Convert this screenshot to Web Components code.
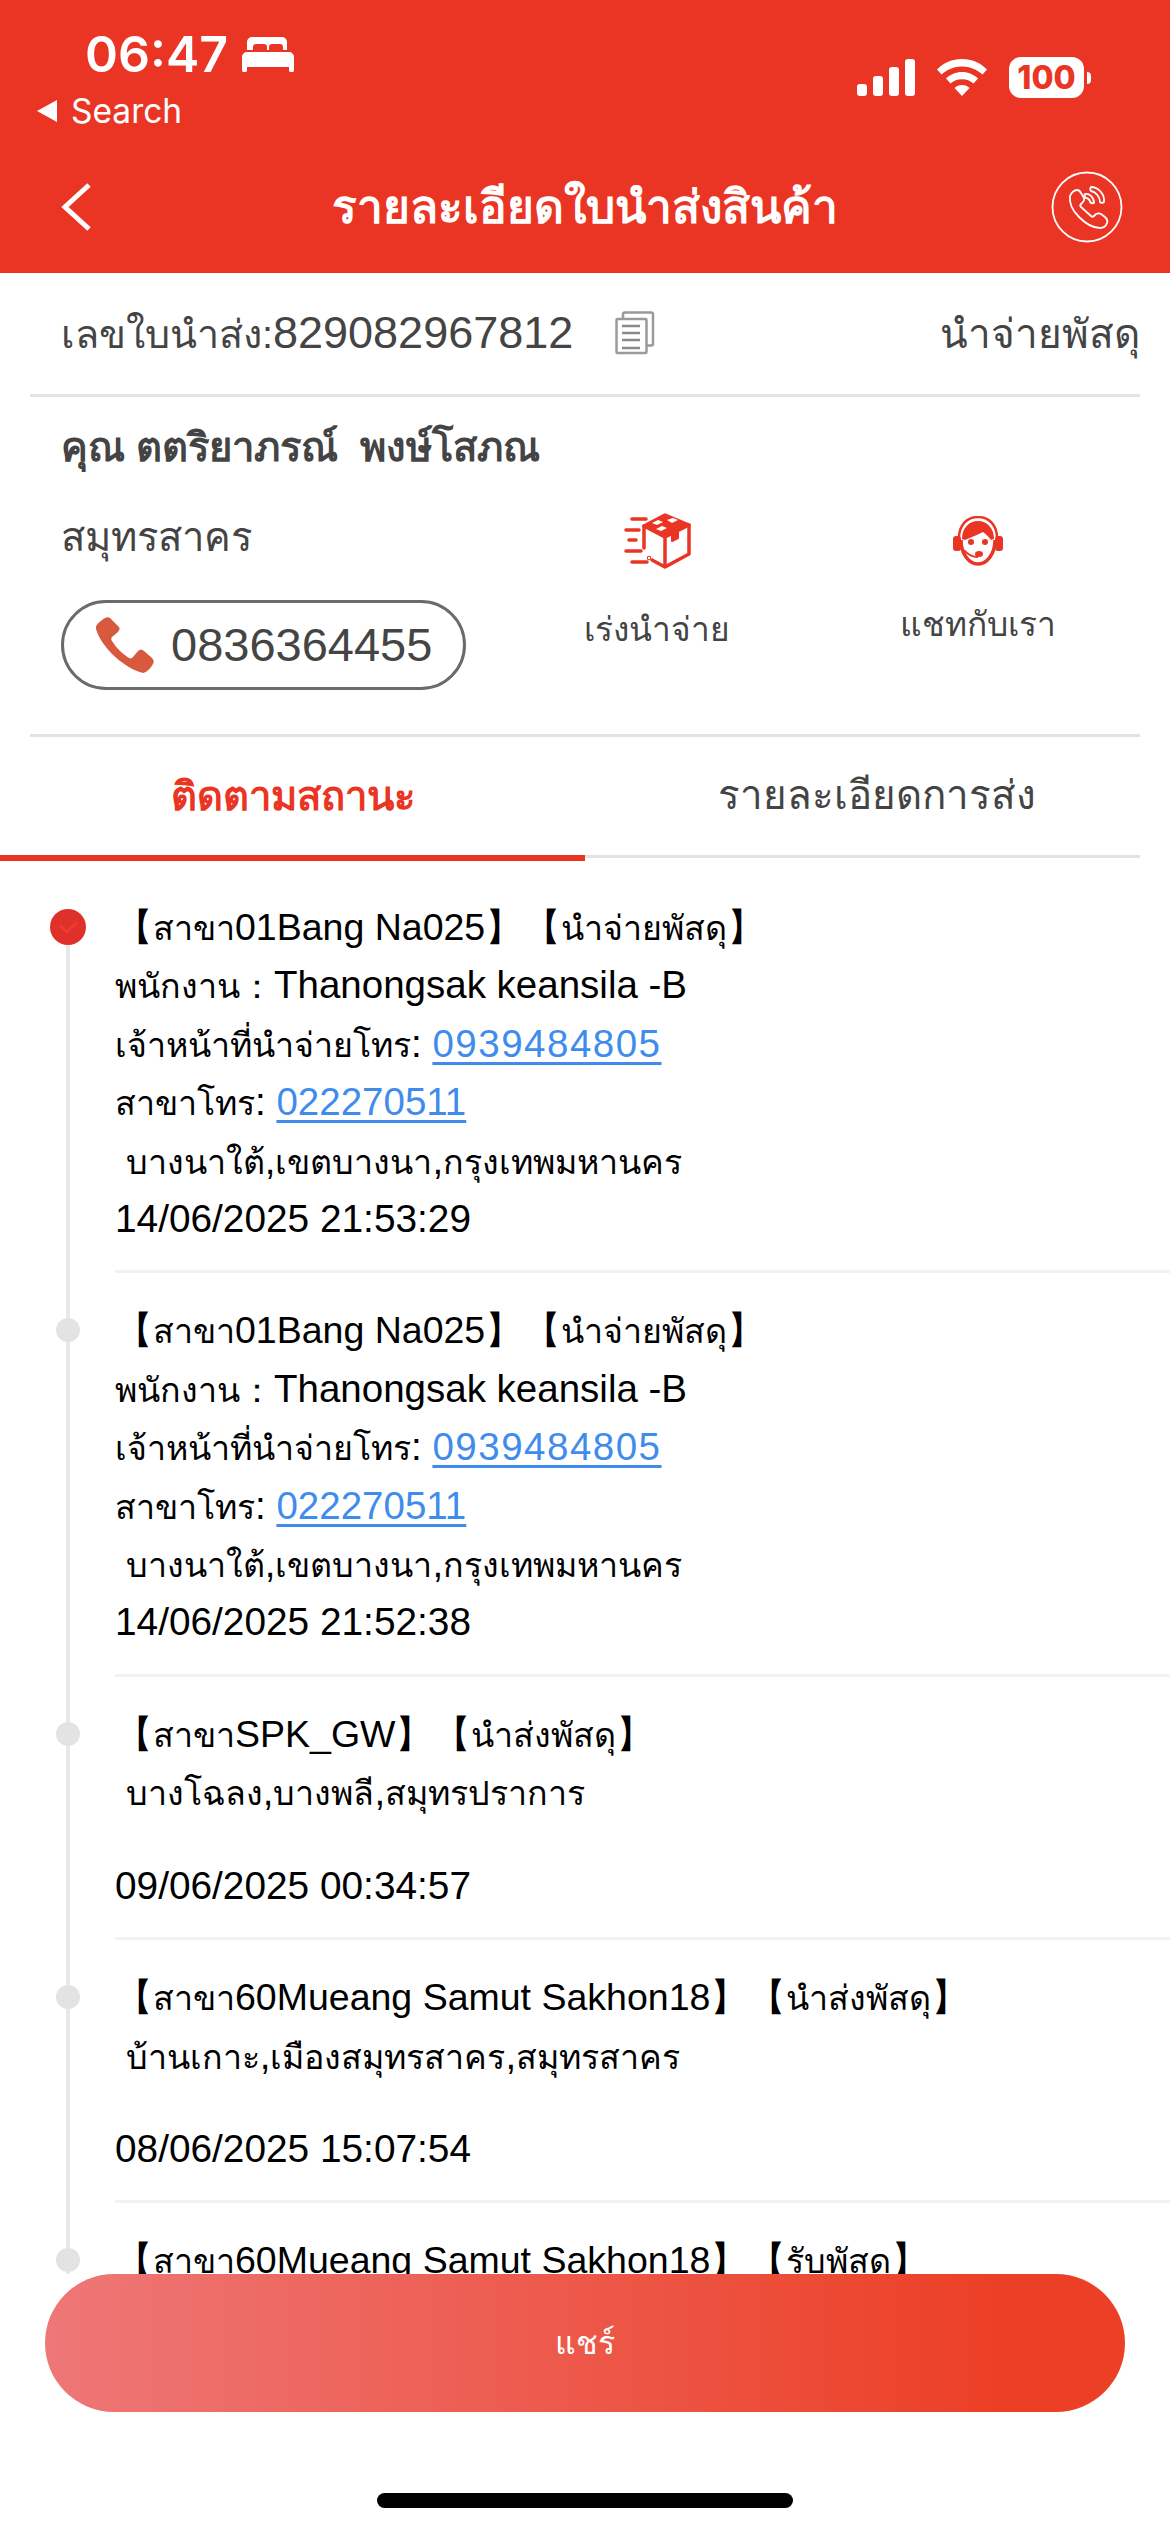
<!DOCTYPE html>
<html lang="th">
<head>
<meta charset="utf-8">
<title>รายละเอียดใบนำส่งสินค้า</title>
<style>
  html, body { margin: 0; padding: 0; background: #fff; }
  body { font-family: "Liberation Sans", "Noto Sans", sans-serif; }
  track-item a { color: #3f8ced; text-underline-offset: 5px; }
  track-item a.wide { letter-spacing: 1.500px; }
  track-item .th { font-size: 34px; line-height: 1; }
  track-item div:first-child { font-size: 37.500px; }
  track-item div:last-child:not(:first-child) { font-size: 38.800px; }
</style>
</head>
<body>
<waybill-app>
  <status-bar slot="top"></status-bar>
  <nav-bar slot="top">รายละเอียดใบนำส่งสินค้า</nav-bar>
  <waybill-row slot="top" number="829082967812" state="นำจ่ายพัสดุ"></waybill-row>
  <contact-card slot="top" name="คุณ ตตริยาภรณ์  พงษ์โสภณ" area="สมุทรสาคร" phone="0836364455"></contact-card>
  <track-tabs slot="top"></track-tabs>

  <track-item first>
    <div>【สาขา01Bang Na025】【นำจ่ายพัสดุ】</div>
    <div>พนักงาน：Thanongsak keansila -B</div>
    <div>เจ้าหน้าที่นำจ่ายโทร: <a class="wide" href="#">0939484805</a></div>
    <div>สาขาโทร: <a href="#">022270511</a></div>
    <div>&nbsp;บางนาใต้,เขตบางนา,กรุงเทพมหานคร</div>
    <div>14/06/2025 21:53:29</div>
  </track-item>
  <track-item>
    <div>【สาขา01Bang Na025】【นำจ่ายพัสดุ】</div>
    <div>พนักงาน：Thanongsak keansila -B</div>
    <div>เจ้าหน้าที่นำจ่ายโทร: <a class="wide" href="#">0939484805</a></div>
    <div>สาขาโทร: <a href="#">022270511</a></div>
    <div>&nbsp;บางนาใต้,เขตบางนา,กรุงเทพมหานคร</div>
    <div>14/06/2025 21:52:38</div>
  </track-item>
  <track-item short>
    <div>【สาขาSPK_GW】【นำส่งพัสดุ】</div>
    <div>&nbsp;บางโฉลง,บางพลี,สมุทรปราการ</div>
    <div>09/06/2025 00:34:57</div>
  </track-item>
  <track-item short>
    <div>【สาขา60Mueang Samut Sakhon18】【นำส่งพัสดุ】</div>
    <div>&nbsp;บ้านเกาะ,เมืองสมุทรสาคร,สมุทรสาคร</div>
    <div>08/06/2025 15:07:54</div>
  </track-item>
  <track-item short>
    <div>【สาขา60Mueang Samut Sakhon18】【รับพัสดุ】</div>
  </track-item>

  <share-footer slot="bottom">แชร์</share-footer>
</waybill-app>

<script>
const FONT = `"Liberation Sans", "Noto Sans", sans-serif`;

// small helper so each element only has to hand over its html
class Base extends HTMLElement {
  constructor() {
    super();
    this.attachShadow({ mode: "open" });
  }
  connectedCallback() {
    this.shadowRoot.innerHTML = this.render();
  }
}

class WaybillApp extends Base {
  render() {
    return `<style>
      :host { display: flex; flex-direction: column; width: 1170px; height: 2532px; overflow: hidden; background: #fff; font-family: ${FONT}; }
      .list { flex: 1; min-height: 0; overflow: hidden; padding-top: 9px; }
    </style>
    <slot name="top"></slot>
    <div class="list"><slot></slot></div>
    <slot name="bottom"></slot>`;
  }
}

class StatusBar extends Base {
  render() {
    return `<style>
      :host { display: flex; justify-content: space-between; height: 140px; box-sizing: border-box; background: #ea3524; color: #fff; padding: 27px 79px 0 37px; }
      .time { display: flex; align-items: center; gap: 14px; margin-left: 48px; height: 54px; font: 600 50px/54px Inter, ${FONT}; }
      .back { display: flex; align-items: center; gap: 14px; margin-top: 3px; font: 400 33.500px/54px Inter, ${FONT}; }
      .back i { width: 0; height: 0; border: 11px solid transparent; border-left: 0; border-right: 20px solid #fff; }
      .icons { display: flex; align-items: flex-start; gap: 22px; padding-top: 32px; }
      .batt { display: flex; align-items: center; gap: 3px; }
      .cell { width: 75px; height: 41px; border-radius: 12px; background: #fff; color: #ea3524; font: 800 32px/41px Inter, ${FONT}; text-align: center; }
      .tip { width: 4px; height: 12px; background: #fff; border-radius: 0 6px 6px 0; }
      svg { display: block; }
    </style>
    <div>
      <div class="time">06:47
        <svg width="52" height="35" viewBox="0 0 52 35" fill="#fff">
          <path d="M10 0h30a5 5 0 0 1 5 5v8h-4v-3a3 3 0 0 0-3-3h-8a3 3 0 0 0-3 3v3h-2v-3a3 3 0 0 0-3-3h-8a3 3 0 0 0-3 3v3H5V5a5 5 0 0 1 5-5z"/>
          <path d="M5 15h42a5 5 0 0 1 5 5v13a2.500 2.500 0 0 1-5 0v-3H5v3a2.500 2.500 0 0 1-5 0V20a5 5 0 0 1 5-5z"/>
        </svg>
      </div>
      <div class="back"><i></i>Search</div>
    </div>
    <div class="icons">
      <svg width="58" height="37" viewBox="0 0 58 37" fill="#fff">
        <rect x="0" y="25" width="10" height="12" rx="3"/><rect x="16" y="17" width="10" height="20" rx="3"/>
        <rect x="32" y="8" width="10" height="29" rx="3"/><rect x="48" y="0" width="10" height="37" rx="3"/>
      </svg>
      <svg width="50" height="37" viewBox="0 0 50 37" fill="#fff">
        <path d="M25 0c10 0 18.500 4 25 10.500l-4.500 5C40 10.500 33 7.500 25 7.500S10 10.500 4.500 15.500L0 10.500C6.500 4 15 0 25 0z"/>
        <path d="M25 13c6.500 0 11.500 2.500 16 6.500l-4.500 5C33.500 21.800 29.500 20.300 25 20.300s-8.500 1.500-11.500 4.200L9 19.500C13.500 15.500 18.500 13 25 13z"/>
        <path d="M25 26c3 0 5.500 1 7.500 3L25 37l-7.500-8c2-2 4.500-3 7.500-3z"/>
      </svg>
      <div class="batt" style="margin-top:-2px"><div class="cell">100</div><div class="tip"></div></div>
    </div>`;
  }
}

class NavBar extends Base {
  render() {
    return `<style>
      :host { display: grid; grid-template-columns: 1fr auto 1fr; align-items: center; height: 133px; box-sizing: border-box; background: #ea3524; color: #fff; padding: 0 47px; }
      .title { font: 700 46px/60px ${FONT}; }
      svg { display: block; }
      .chev { margin-left: 13px; }
      .call { justify-self: end; }
    </style>
    <svg class="chev" width="32" height="50" viewBox="0 0 32 50" fill="none" stroke="#fff" stroke-width="5"><path d="M29 3L5 25l24 22"/></svg>
    <div class="title"><slot></slot></div>
    <svg class="call" width="72" height="72" viewBox="0 0 72 72" fill="none" stroke="#fff" stroke-width="1.800" stroke-linejoin="round" stroke-linecap="round">
      <circle cx="36" cy="36" r="34.500"/>
      <path d="M19 25c1-3 4-6 7-6 2 0 3 1 4 3l3 5c1 2 0 3-2 5l-1 1c-1 1-1 2 0 3l10 9c1 1 2 1 3 0l2-2c2-1 3-1 5 0l4 3c2 2 3 4 2 6-1 3-4 5-7 5-6 0-14-4-21-11-7-7-10-14-9-21z"/>
      <path d="M34 23c4-1 9 3 9 9-2 1-3 0-4-1 0-2-2-4-4-4-1-1-2-3-1-4z"/>
      <path d="M40 16c7 0 14 7 13 15-1 1-3 1-4 0 0-5-4-10-9-11-1-1-1-3 0-4z"/>
    </svg>`;
  }
}

class WaybillRow extends Base {
  render() {
    return `<style>
      :host { display: block; padding: 0 30px; color: #444; font: 400 39.500px/50px ${FONT}; }
      .row { display: flex; align-items: center; height: 121px; padding: 0 0 0 31px; border-bottom: 3px solid #e3e3e3; }
      .num { font-size: 45px; }
      .state { margin-left: auto; font-size: 40.500px; }
      svg { display: block; margin: -2px 0 0 42px; }
    </style>
    <div class="row">
      <span>เลขใบนำส่ง:<span class="num">${this.getAttribute("number")}</span></span>
      <svg width="40" height="44" viewBox="0 0 40 44" fill="#fff" stroke="#9a9a9a" stroke-width="2.500">
        <rect x="8" y="1.500" width="30" height="33" rx="2"/>
        <rect x="1.500" y="8" width="30" height="34" rx="1"/>
        <path d="M7 15h18M7 22h18M7 29h18M7 37h18" stroke="#8a8a8a"/>
      </svg>
      <span class="state">${this.getAttribute("state")}</span>
    </div>`;
  }
}

class ContactCard extends Base {
  render() {
    return `<style>
      :host { display: block; padding: 0 30px; color: #444; }
      .wrap { border-bottom: 3px solid #e3e3e3; height: 340px; box-sizing: border-box; padding: 22px 0 0 31px; }
      .name { font: 700 40px/56px ${FONT}; white-space: pre; }
      .grid { display: grid; grid-template-columns: 486px 220px 101px 220px; margin-top: 4px; }
      .area { font: 400 40px/56px ${FONT}; margin-top: 30px; }
      .pill { display: flex; align-items: center; gap: 17px; box-sizing: border-box; width: 405px; height: 90px; margin-top: 35px; padding-left: 32px; border: 3px solid #6b6b6b; border-radius: 45px; font: 400 47px/50px ${FONT}; }
      .action { display: flex; flex-direction: column; align-items: center; padding-top: 34px; font: 400 33.500px/50px ${FONT}; }
      .icon { height: 56px; display: flex; align-items: center; }
      .action span { margin-top: 36px; }
      .action.chat span { margin-top: 31px; }
      svg { display: block; }
    </style>
    <div class="wrap">
      <div class="name">${this.getAttribute("name")}</div>
      <div class="grid">
        <div>
          <div class="area">${this.getAttribute("area")}</div>
          <div class="pill">
            <svg width="58" height="56" viewBox="0 0 58 56" fill="#d9593f"><path d="M6 3C8 1 12-1 14 1l8 8c2 2 2 3 0 6l-6 5c-1 1-1 3 0 4 5 8 11 13 17 17 2 1 3 0 4-1l5-6c2-2 4-2 6 0l8 7c2 2 2 4 1 6-3 5-6 8-10 9C30 52 6 32 0 12-1 9 2 6 6 3z"/></svg>
            <span>${this.getAttribute("phone")}</span>
          </div>
        </div>
        <div class="action">
          <div class="icon">
            <svg width="67" height="56" viewBox="0 0 67 56" fill="none" stroke="#ea3524" stroke-width="3.500" stroke-linecap="round" stroke-linejoin="round">
              <path d="M20 13L41 2l24 10L41 24z" fill="#ea3524"/>
              <path d="M28 10l6-3 5 2-6 3zM43 7l6-2 5 2-6 3zM32 16l6-3 5 2-6 3z" fill="#fff" stroke="none"/>
              <path d="M20 13v22M65 12v29L41 54l-13-7M41 24v30"/>
              <path d="M48 21v7l6-3v-7" fill="#ea3524" stroke-width="2"/>
              <path d="M8 6h14M2 17h13M5 27h7M2 38h15M8 49h15"/>
              <circle cx="25" cy="45" r=".5"/>
            </svg>
          </div>
          <span>เร่งนำจ่าย</span>
        </div>
        <div></div>
        <div class="action chat">
          <div class="icon">
            <svg width="50" height="50" viewBox="0 0 50 50">
              <path d="M6 22C6 9 14 1 25 1s19 8 19 21" fill="none" stroke="#ea3524" stroke-width="2.500"/>
              <path d="M9 23C9 12 16 5 25 5s16 7 16 18l-3 1c-2-3-5-6-8-8-5 3-12 5-18 8z" fill="#ea3524"/>
              <rect x="0" y="20" width="8" height="15" rx="3" fill="#ea3524"/>
              <rect x="42" y="20" width="8" height="15" rx="3" fill="#ea3524"/>
              <path d="M8 24c0 14 8 24 17 24s17-10 17-24" fill="none" stroke="#ea3524" stroke-width="3.500"/>
              <circle cx="18" cy="26" r="3" fill="#ea3524"/><circle cx="32" cy="26" r="3" fill="#ea3524"/>
              <path d="M11 34c4 5 8 7 14 7" fill="none" stroke="#ea3524" stroke-width="2"/>
              <ellipse cx="26" cy="38" rx="4" ry="3" fill="#ea3524"/>
            </svg>
          </div>
          <span>แชทกับเรา</span>
        </div>
      </div>
    </div>`;
  }
}

class TrackTabs extends Base {
  render() {
    return `<style>
      :host { display: flex; align-items: flex-start; height: 124px; box-sizing: border-box; padding-right: 30px; font: 400 40.300px/56px ${FONT}; color: #444; }
      .tab { display: flex; align-items: center; justify-content: center; box-sizing: border-box; border-bottom: 3px solid #e3e3e3; height: 121px; }
      .on { width: 585px; height: 124px; color: #ea3524; font-weight: 700; font-size: 40px; border-bottom: 6px solid #ea3524; }
      .off { flex: 1; padding-left: 29px; }
    </style>
    <div class="tab on">ติดตามสถานะ</div>
    <div class="tab off">รายละเอียดการส่ง</div>`;
  }
}

class TrackItem extends Base {
  render() {
    const first = this.hasAttribute("first");
    // thai runs sit smaller than the latin and digits around them
    this.querySelectorAll("div").forEach((line) => {
      line.innerHTML = line.innerHTML.replace(/[\u0E00-\u0E7F：]+/g, (m) => `<span class="th">${m}</span>`);
    });
    const check = first
      ? `<svg width="36" height="36" viewBox="0 0 36 36" fill="none" stroke="#ee3b2e" stroke-width="3"><path d="M10 16l7 7 10-10"/></svg>`
      : "";
    return `<style>
      :host { display: flex; font: 400 38.500px/58.400px ${FONT}; color: #000; }
      .rail { flex: none; width: 115px; display: flex; flex-direction: column; align-items: center; box-sizing: border-box; padding-left: 21px; }
      .up { flex: none; width: 4px; height: ${first ? 39 : 45}px; background: ${first ? "transparent" : "#e8e8e8"}; }
      .dot { flex: none; width: ${first ? 36 : 24}px; height: ${first ? 36 : 24}px; border-radius: 50%; background: ${first ? "#e0302a" : "#e3e3e3"}; }
      .dot svg { display: block; }
      .down { flex: 1; width: 4px; background: #e8e8e8; }
      .body { flex: 1; box-sizing: border-box; padding: 28px 0 22px; border-bottom: 3px solid #f2f2f2; }
      :host([short]) ::slotted(div:nth-child(2)) { margin-bottom: 35px; }
    </style>
    <div class="rail"><div class="up"></div><div class="dot">${check}</div><div class="down"></div></div>
    <div class="body"><slot></slot></div>`;
  }
}

class ShareFooter extends Base {
  render() {
    return `<style>
      :host { display: block; height: 258px; box-sizing: border-box; padding: 0 45px; background: #fff; }
      .btn { display: flex; align-items: center; justify-content: center; height: 138px; border-radius: 69px; background: linear-gradient(90deg, #ee7777 0%, #ec4026 88%); color: #fff; font: 400 32px/44px ${FONT}; }
      .home { width: 416px; height: 15px; margin: 81px auto 0; background: #000; border-radius: 8px; }
    </style>
    <div class="btn"><slot></slot></div>
    <div class="home"></div>`;
  }
}

customElements.define("waybill-app", WaybillApp);
customElements.define("status-bar", StatusBar);
customElements.define("nav-bar", NavBar);
customElements.define("waybill-row", WaybillRow);
customElements.define("contact-card", ContactCard);
customElements.define("track-tabs", TrackTabs);
customElements.define("track-item", TrackItem);
customElements.define("share-footer", ShareFooter);
</script>
</body>
</html>
